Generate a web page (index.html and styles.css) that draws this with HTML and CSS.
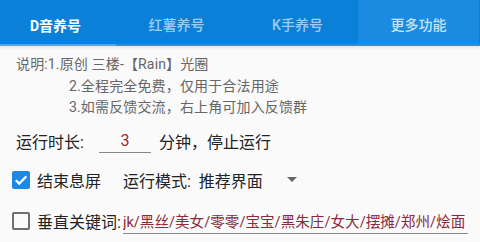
FILE: index.html
```html
<!DOCTYPE html>
<html>
<head>
	<meta http-equiv="Content-Type" content="text/html; charset=UTF-8">
	<meta name="viewport" content="width=device-width,initial-scale=1">
	<title>养号助手</title>
	<link rel="stylesheet" href="styles.css">
</head>
<body>
<div class="tabbar">
	<div class="tab active">D音养号</div>
	<div class="tab">红薯养号</div>
	<div class="tab">K手养号</div>
	<div class="tab more">更多功能</div>
</div>
<div class="page">
	<div class="note">
		<p>说明:1.原创 三楼-【Rain】光圈</p>
		<p class="indent">2.全程完全免费，仅用于合法用途</p>
		<p class="indent">3.如需反馈交流，右上角可加入反馈群</p>
	</div>
	<div class="row time">
		<span>运行时长:</span>
		<input type="text" class="num" value="3">
		<span>分钟，停止运行</span>
	</div>
	<div class="row sleep">
		<label class="check"><span class="box on"><svg viewBox="0 0 18 18" width="18" height="18"><path d="M3.8 9.2l3.4 3.4L14.4 5.4" fill="none" stroke="#fff" stroke-width="2.2"/></svg></span>结束息屏</label>
		<span class="mode">运行模式:&nbsp; 推荐界面</span>
		<span class="arrow"></span>
	</div>
	<div class="row keyrow">
		<label class="check"><span class="box"></span>垂直关键词:</label>
		<input type="text" class="keys" value="jk/黑丝/美女/零零/宝宝/黑朱庄/女大/摆摊/郑州/烩面">
	</div>
</div>
</body>
</html>
```
FILE: styles.css
```css
body {
	margin: 0;
	background: #fafafa;
	font-family: Roboto, "Noto Sans CJK SC", sans-serif;
	color: #222;
	overflow: hidden;
}
.tabbar {
	display: flex;
	height: 44px;
	background: #0b80d8;
	margin-left: -5px;
	border-bottom: 2px solid #2790e0;
	box-shadow: 0 2px 3px rgba(0,0,0,0.08);
}
.tab {
	width: 121px;
	flex: none;
	display: flex;
	align-items: center;
	justify-content: center;
	padding-top: 3px;
	box-sizing: border-box;
	font-size: 14px;
	font-weight: 500;
	color: #9fcdf2;
}
.tab.active {
	color: #fff;
	font-weight: bold;
	border-bottom: 2px solid #4aa9f0;
	height: 46px;
	padding-top: 5px;
}
.tab.more {
	background: #1a8be0;
	color: #c8e3f8;
}
.page {
	padding: 8px 0 0 16px;
}
.note {
	color: #666;
	font-size: 14px;
	line-height: 21.5px;
	letter-spacing: 0.15px;
}
.note p {
	margin: 0;
}
.note .indent {
	padding-left: 53px;
}
.row {
	display: flex;
	align-items: center;
	font-size: 16px;
	height: 40px;
}
.time {
	margin-top: 2px;
}
.sleep {
	margin-top: -1px;
	margin-bottom: 1px;
}
.num {
	width: 52px;
	height: 24px;
	box-sizing: border-box;
	margin: 0 8px 0 15px;
	border: none;
	border-bottom: 1px solid #888;
	background: none;
	font: 16px Roboto, sans-serif;
	color: #9e2d3b;
	text-align: center;
	padding: 0;
	outline: none;
}
.check {
	display: flex;
	align-items: center;
	margin-left: -4px;
}
.box {
	width: 14px;
	height: 14px;
	border: 2px solid #6e6e6e;
	border-radius: 2px;
	margin-right: 7px;
	display: flex;
	align-items: center;
	justify-content: center;
}
.box.on {
	background: #1e88e5;
	border-color: #1e88e5;
}
.box svg {
	flex: none;
}
.mode {
	margin-left: 22px;
}
.arrow {
	margin-left: 24px;
	border-left: 5px solid transparent;
	border-right: 5px solid transparent;
	border-top: 5px solid #666;
}
.keys {
	flex: none;
	width: 345px;
	height: 26px;
	box-sizing: border-box;
	margin-left: 2px;
	border: none;
	border-bottom: 1px solid #888;
	background: none;
	font: 14.6px Roboto, "Noto Sans CJK SC", sans-serif;
	color: #8b2a3a;
	padding: 0;
	outline: none;
}
```
